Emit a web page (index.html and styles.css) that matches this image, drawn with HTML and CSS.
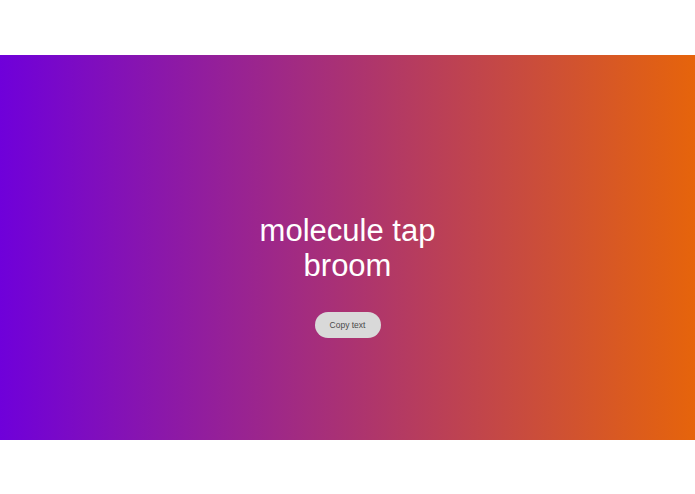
FILE: index.html
```html
<!DOCTYPE html>
<html>
<head>
<meta charset="utf-8">
<link rel="stylesheet" href="styles.css">
</head>
<body>
<div class="top"></div>
<section class="band">
  <h1 class="phrase">molecule tap broom</h1>
  <button class="copy">Copy text</button>
</section>
</body>
</html>
```
FILE: styles.css
```css
html, body {
  margin: 0;
  padding: 0;
  background: #ffffff;
  font-family: "Liberation Sans", Arial, sans-serif;
}
.top {
  height: 55px;
}
.band {
  height: 385px;
  box-sizing: border-box;
  padding-top: 158px;
  background: linear-gradient(to right, #6f00da, #e6640b);
  display: flex;
  flex-direction: column;
  align-items: center;
}
.phrase {
  margin: 0;
  width: 200px;
  text-align: center;
  color: #ffffff;
  font-weight: normal;
  font-size: 31px;
  line-height: 35px;
}
.copy {
  margin-top: 29px;
  width: 66px;
  height: 26px;
  border: none;
  border-radius: 13px;
  background: #d9d9d9;
  color: #4a4a4a;
  font-family: "Liberation Sans", Arial, sans-serif;
  font-size: 8.5px;
  padding: 0;
}
```
